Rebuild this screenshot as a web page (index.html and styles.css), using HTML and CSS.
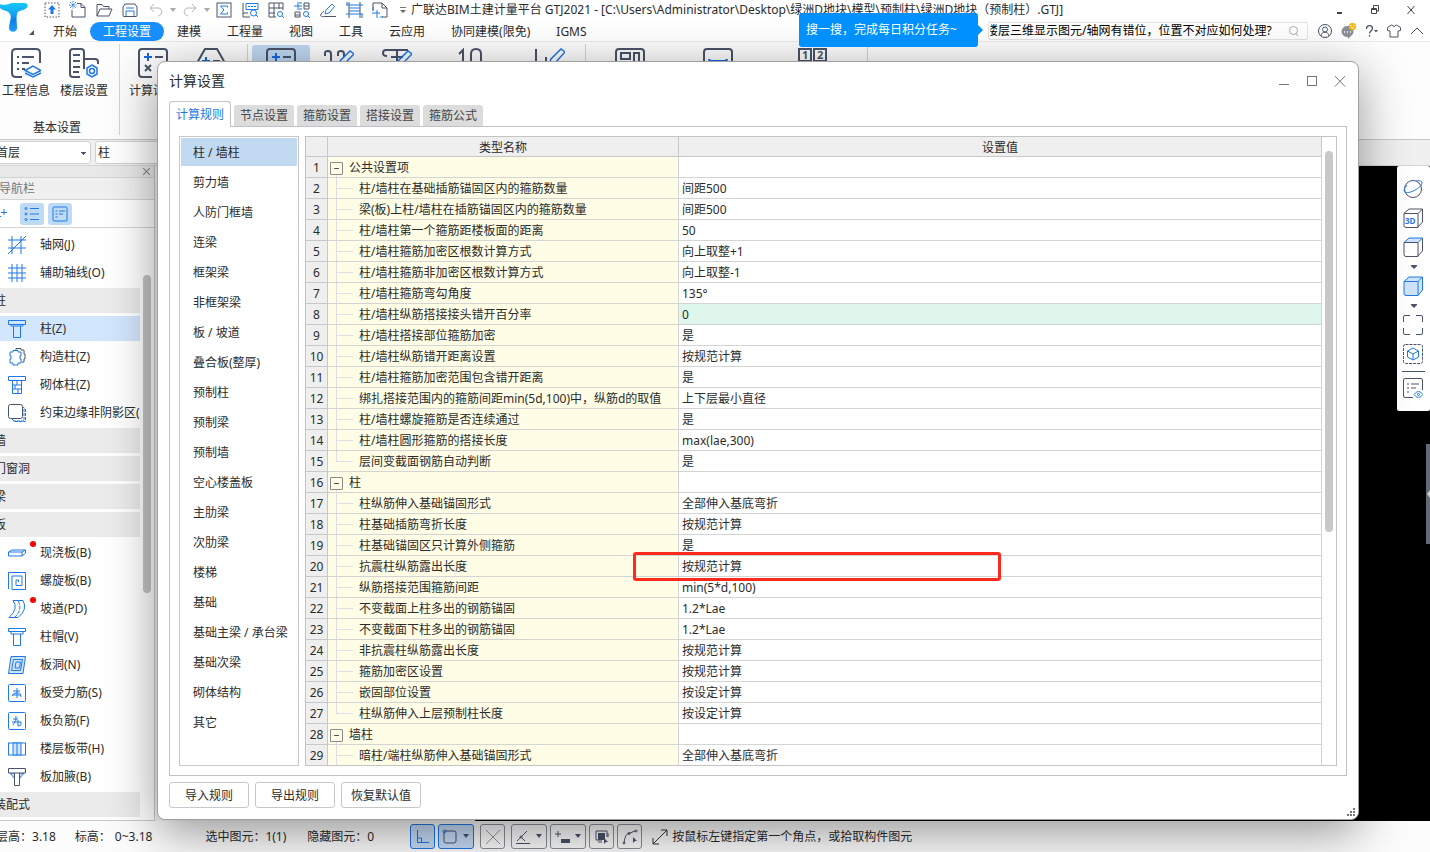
FILE: index.html
```html
<!DOCTYPE html>
<html lang="zh-CN">
<head>
<meta charset="utf-8">
<title>广联达BIM土建计量平台 GTJ2021</title>
<link rel="stylesheet" href="styles.css">
</head>
<body>
<div class="app">
  <header class="header">
    <div class="brand">
      <svg class="logo" viewBox="0 0 29 30" aria-hidden="true"><defs><linearGradient id="lg" x1="0" y1="0" x2="0" y2="1"><stop offset="0" stop-color="#16c8f6"/><stop offset=".35" stop-color="#16a6f4"/><stop offset=".6" stop-color="#0f7fe6"/><stop offset="1" stop-color="#1ba0ff"/></linearGradient></defs><path d="M0 1 C4 3 8 1 12 0 L25 0 C29 1 28 5 25 6 C22 8 18 7 17 11 C16 15 17 20 17 25 C17 30 9 30 9 25 C9 20 12 15 10 11 C8 7 3 8 0 5Z" fill="url(#lg)"/></svg>
      <svg class="brand-menu" viewBox="0 0 5 5" aria-hidden="true"><path d="M5 0V5H0Z" fill="#555"/></svg>
    </div>
    <div class="titlebar">
      <button class="qa" aria-label="上传"><svg viewBox="0 0 18 18"><rect x="2" y="2" width="14" height="14" stroke-dasharray="1.5 1.5"/><path class="bf" d="M9 4l4 4.5H10.500V13h-3V8.500H5Z"/></svg></button>
      <button class="qa" aria-label="新建"><svg viewBox="0 0 18 18"><path d="M8 2.500h4l4 4V16H3V9M12 2.500v4h4"/><path class="b" d="M1 1l6 6M7 1L1 7M4 0v8M0 4h8" stroke-dasharray="1.500 1"/></svg></button>
      <button class="qa" aria-label="打开"><svg viewBox="0 0 18 18"><path d="M2 15V3.500h5l1.500 2H14V8M2 15L5 8h12l-3 7Z"/></svg></button>
      <button class="qa" aria-label="保存"><svg viewBox="0 0 18 18"><path d="M4 3h10l2 3v8.500q0 1-1 1H3q-1 0-1-1V6Z"/><path class="b" d="M5 15v-5h8v5M5 7h8"/></svg></button>
      <button class="qa dim" aria-label="撤销"><svg viewBox="0 0 18 18"><path d="M7 3L3 7l4 4M3 7h8c5 0 5 7 0 8"/></svg></button>
      <svg class="mini" viewBox="0 0 8 5" aria-hidden="true"><path d="M1 0h6L4 4Z" fill="#aaa"/></svg>
      <button class="qa dim" aria-label="恢复"><svg viewBox="0 0 18 18"><path d="M11 3l4 4-4 4M15 7H7c-5 0-5 7 0 8"/></svg></button>
      <svg class="mini" viewBox="0 0 8 5" aria-hidden="true"><path d="M1 0h6L4 4Z" fill="#aaa"/></svg>
      <button class="qa" aria-label="汇总计算"><svg viewBox="0 0 18 18"><rect x="2" y="2" width="14" height="14"/><path class="b" d="M12.500 6.500V5h-7L9 9l-3.500 4h7v-1.500"/></svg></button>
      <button class="qa" aria-label="查看计算式"><svg viewBox="0 0 18 18"><path d="M2 2v14h7M2 12h5"/><path class="b" d="M5 2.500h12v6H5Z"/><path class="b" d="M7 5.500h9" stroke-dasharray="2 1"/><circle class="b" cx="12.500" cy="12" r="3"/><path class="b" d="M15 14l2 2"/></svg></button>
      <button class="qa" aria-label="查看工程量"><svg viewBox="0 0 18 18"><path d="M9 16H2V2h14v7M2 7h14M2 12h6M7 2v14M12 2v6"/><circle class="b" cx="13" cy="13" r="2.500"/><path class="b" d="M15 15l2 2"/></svg></button>
      <button class="qa" aria-label="查看钢筋量"><svg viewBox="0 0 18 18"><path d="M11 2h5v6h-5ZM2 11h5v5H2ZM2 14h5M11 5h5"/><path class="b" d="M1 5h8M5 1v8M6 2h3M6 8h3"/><circle class="b" cx="13" cy="13" r="2.500"/><path class="b" d="M15 15l2 2"/></svg></button>
      <button class="qa" aria-label="编辑"><svg viewBox="0 0 18 18"><path class="b" d="M7 9l6-6 2.500 2.500L10 12l-4 1Z"/><path d="M5 10c-6 5-3 6 1 5.500h11"/></svg></button>
      <button class="qa" aria-label="楼层"><svg viewBox="0 0 18 18"><path d="M4 1v16M15 1v16"/><path class="b" d="M1 4h17M1 13h17M4 7h11M4 10h11M2 1v3M17 13v4"/></svg></button>
      <button class="qa" aria-label="选择"><svg viewBox="0 0 18 18"><path d="M2 10V2h9l5 5v9h-5M11 2v5h5"/><path class="b" d="M1 12h8M6 9v8M2 6v3M9 16h3"/></svg></button>
      <svg class="more" viewBox="0 0 8 8" aria-hidden="true"><path d="M1 1.500h6" stroke="#777"/><path d="M1 4h6L4 7Z" fill="#666"/></svg>
      <h1 class="doc">广联达BIM土建计量平台 GTJ2021 - [C:\Users\Administrator\Desktop\绿洲D地块\模型\预制柱\绿洲D地块（预制柱）.GTJ]</h1>
      <div class="winctl">
        <button aria-label="最小化"><svg viewBox="0 0 12 12"><path d="M4 9h5" stroke-width="2"/></svg></button>
        <button aria-label="还原"><svg viewBox="0 0 12 12"><path d="M2.500 4.500h5v5h-5ZM4.500 4V1.500h5v5.500H8M3 5.500h4"/></svg></button>
        <button aria-label="关闭"><svg viewBox="0 0 12 12"><path d="M2.500 2l7 8M9.500 2l-7 8"/></svg></button>
      </div>
    </div>
    <nav class="menu">
      <a href="#">开始</a><a href="#" class="on">工程设置</a><a href="#">建模</a><a href="#">工程量</a><a href="#">视图</a><a href="#">工具</a><a href="#">云应用</a><a href="#">协同建模(限免)</a><a href="#">IGMS</a>
      <div class="tools">
        <div class="search">
          <input type="text" aria-label="搜索" value="楼层三维显示图元/轴网有错位，位置不对应如何处理?">
          <svg viewBox="0 0 12 12" aria-hidden="true"><circle cx="5.500" cy="5.500" r="4" fill="none" stroke="#aaa"/><path d="M8 8.500l2 2.500" stroke="#aaa"/></svg>
        </div>
        <button aria-label="用户"><svg viewBox="0 0 16 16"><circle cx="8" cy="8" r="6.500"/><circle cx="8" cy="6.500" r="2.500"/><path d="M4 13c0-5 8-5 8 0"/></svg></button>
        <button aria-label="消息"><svg viewBox="0 0 16 16"><path d="M7 3a6 5.500 0 1 0 1 11v2l3-3a5.500 5.500 0 0 0-4-10Z" fill="#8b8f96" stroke="none"/><path d="M4 9h1M7 9h1M10 9h1" stroke="#fff" stroke-width="1.500"/><rect x="9" y="0" width="7" height="7" rx="3" fill="#f9b514" stroke="none"/><path d="M11 2v1M14 2v1M11 4q1.500 2 3 0" stroke="#fff"/></svg></button>
        <button aria-label="帮助"><svg viewBox="0 0 16 16"><path d="M3.500 6c0-5 6-4 6-.5 0 2.500-3 2.500-3 5M6.500 12v1.500" stroke-width="1.300"/><path d="M11 7h4l-2 2.500Z" fill="#4a5368" stroke="none"/></svg></button>
        <button aria-label="皮肤"><svg viewBox="0 0 16 16"><path d="M5.500 2L1.500 4.500v3L4 8v6h8V8l2.500-.5v-3L10.500 2Q8 5 5.500 2Z"/></svg></button>
        <button aria-label="收起"><svg viewBox="0 0 16 16"><path d="M2 11l6-6 6 6"/></svg></button>
      </div>
    </nav>
    <div class="tip">搜一搜，完成每日积分任务~</div>
  </header>

  <section class="ribbon" aria-label="功能区">
    <div class="rgroup first">
      <div class="rbtns">
        <button class="rb"><svg viewBox="0 0 30 30"><path d="M29 15V5q0-4-4-4H5Q1 1 1 5v20q0 4 4 4h6M6 9h2M11 9h12M6 15h2M11 15h7M6 21h2M11 21h3"/><path class="b" d="M14 22.500l8-4.500 8 4.500-8 4Z M14 25l8 4 8-4"/></svg>工程信息</button>
        <button class="rb"><svg viewBox="0 0 30 30"><path d="M11 29H4q-3 0-3-3V4q0-3 3-3h8q3 0 3 3v17M4 7h7M4 13h7M4 19h7M4 24h6M15 11h11q3 0 3 3v2"/><path class="b" d="M23 17l5 3v6l-5 3-5-3v-6Z"/><circle class="b" cx="23" cy="23" r="2.500"/></svg>楼层设置</button>
      </div>
      <div class="rname">基本设置</div>
    </div>
    <div class="rgroup">
      <div class="rbtns">
        <button class="rb"><svg viewBox="0 0 30 30"><path d="M29 15V4q0-3-3-3H4Q1 1 1 4v22q0 3 3 3h10M17 9h8M7 17l6 6M13 17l-6 6"/><path class="b2" d="M6 9h8M10 5v8"/></svg>计算设置</button>
        <button class="rb" aria-label="比重设置"><svg viewBox="0 0 30 30"><path d="M1 15L9 1h12l8 14M17 13h7"/><path class="b2" d="M6 13h8M10 9v8"/></svg></button>
      </div>
    </div>
    <div class="rgroup">
      <div class="rbtns">
        <button class="rb sel" aria-label="计算规则"><svg viewBox="0 0 30 30"><path d="M29 18V4q0-3-3-3H4Q1 1 1 4v22M17 9h8"/><path class="b2" d="M6 9h8M10 5v8"/></svg></button>
        <button class="rb" aria-label="弯钩设置"><svg viewBox="0 0 30 30"><path d="M1 8V5q0-2 3-2t3 3v12M14 8V5q0-2 3-2t3 3v3"/><path class="b" d="M14 18l2-5L26 3l4 3-10 10-3 3"/></svg></button>
        <button class="rb" aria-label="弯曲调整"><svg viewBox="0 0 30 30"><path d="M5 8Q1 8 1 5q0-3 3-3h22M15 3v12M9 9h12"/><path class="b" d="M14 18l2-5L26 3l4 3-10 10-3 3"/></svg></button>
        <button class="rb wide" aria-label="损耗设置"><svg viewBox="0 0 30 30"><path d="M4 6l4-4v20M16 18V6q0-5 5-5t5 5v14"/></svg></button>
        <button class="rb mid" aria-label="报表设置"><svg viewBox="0 0 30 30"><path d="M1 1v20M6 13v8M11 9v8"/><path class="b" d="M14 16l2-5L26 1l4 3-10 11-3 3"/></svg></button>
      </div>
    </div>
    <div class="rgroup last">
      <div class="rbtns">
        <button class="rb wide" aria-label="布局"><svg viewBox="0 0 30 30"><rect x="1" y="1" width="28" height="28" rx="3"/><path d="M6 5h9v6H6ZM19 5h5v12h-5ZM6 15h9"/></svg></button>
        <button class="rb wide" aria-label="锁定"><svg viewBox="0 0 30 30"><rect x="1" y="1" width="28" height="28" rx="3"/><path class="b2" d="M6 11q0 2 3 2h12q3 0 3-2"/></svg></button>
        <button class="rb xwide" aria-label="编号"><svg viewBox="0 0 30 30"><rect x="1" y="1" width="12" height="12"/><rect x="16" y="1" width="12" height="12"/><text x="4" y="11">1</text><text x="19" y="11">2</text></svg></button>
      </div>
    </div>
  </section>

  <div class="picker">
    <select aria-label="楼层"><option>首层</option></select>
    <select class="kind" aria-label="构件"><option>柱</option></select>
  </div>

  <main class="work">
    <aside class="nav">
      <div class="nav-top"><button aria-label="关闭导航栏"><svg viewBox="0 0 10 10"><path d="M2 2l6 6M8 2L2 8"/></svg></button></div>
      <h2 class="nav-title">导航栏</h2>
      <div class="nav-tools">
        <button class="plus" aria-label="添加"><svg viewBox="0 0 20 20"><path d="M14 5v6M11 8.500h6M8.500 10v5M6 12.500h5"/></svg></button>
        <button class="act" aria-label="列表"><svg viewBox="0 0 20 20"><path d="M8 4.500h9M8 10h9M8 15.500h9"/><circle cx="4" cy="4.500" r="1"/><circle cx="4" cy="10" r="1"/><circle cx="4" cy="15.500" r="1"/></svg></button>
        <button class="act" aria-label="详情"><svg viewBox="0 0 20 20"><rect x="3" y="3" width="14" height="14" rx="1"/><path d="M5.500 7h2M9 7h6M5.500 10h2M9 10h4M5.500 13h2"/></svg></button>
      </div>
      <div class="nav-body">
        <ul class="tree">
          <li><svg viewBox="0 0 18 18"><path d="M0 4h18M0 12h18M4 0v18M13 0v18M0 18L18 0"/></svg>轴网(J)</li>
          <li><svg viewBox="0 0 18 18"><path d="M0 4h18M0 9h18M0 14h18M4 0v18M9 0v18M14 0v18"/></svg>辅助轴线(O)</li>
          <li class="cat">柱</li>
          <li class="cur"><svg viewBox="0 0 18 18"><path d="M.5 .5h17v4H.5ZM3 4.500V6h12V4.500M5.500 6v11.500h7V6"/></svg>柱(Z)</li>
          <li><svg viewBox="0 0 18 18"><path class="k" d="M8 2V.5h5V2h3v4h1v5h-1v3h-2"/><path d="M5 2.500h5V4h3v4h-1v3h1v4h-3v2H5v-2H2v-4h1V8H2V4h3Z"/></svg>构造柱(Z)</li>
          <li><svg viewBox="0 0 18 18"><path d="M.5 .5h17v4H.5ZM4.500 4.500v13h9v-13M4.500 9h9M4.500 13h9M9 5v4M7 9v4M10 13v4"/></svg>砌体柱(Z)</li>
          <li><svg viewBox="0 0 18 18"><path d="M4 15l3 2.500h10.500V5L15 3M16 5v12H5" stroke-dasharray="3 1"/><rect class="k" x=".5" y=".5" width="14" height="14" rx="2"/></svg>约束边缘非阴影区(Z)</li>
          <li class="cat">墙</li>
          <li class="cat">门窗洞</li>
          <li class="cat">梁</li>
          <li class="cat">板</li>
          <li class="new"><svg viewBox="0 0 18 18"><path d="M.5 8L4 6h13.500v3L14 12H.5ZM.5 8H14v4M14 8l3.500-2"/></svg>现浇板(B)</li>
          <li><svg viewBox="0 0 18 18"><path d="M.5 17V.5h17v17H4V4h10v9.500H8V8h2.500v2"/></svg>螺旋板(B)</li>
          <li class="new"><svg viewBox="0 0 18 18"><path d="M5 .5q6 8-4 17h9q10-8 5-17Z"/><path d="M10 1q5 8-3 16" stroke-dasharray="4 1"/></svg>坡道(PD)</li>
          <li><svg viewBox="0 0 18 18"><path d="M.5 .5h17v3H.5ZM3 3.500V6h12V3.500M5.500 6v11.500h7V6"/></svg>柱帽(V)</li>
          <li><svg viewBox="0 0 18 18"><path class="fill" d="M3 .5h14.500L15 17.500H.5Z"/><path d="M5.500 3.500h9L12.500 14.500h-9ZM8 6h4.500l-1 6H7Z"/></svg>板洞(N)</li>
          <li><svg viewBox="0 0 18 18"><rect x=".5" y=".5" width="17" height="17" rx="1"/><path d="M5 7h7M9 4v10M4 12q1-3 4-3 5-1 5 4M5 11h8"/></svg>板受力筋(S)</li>
          <li><svg viewBox="0 0 18 18"><rect x=".5" y=".5" width="17" height="17" rx="1"/><path d="M5 7h5M8 4q1 5-3 9M4 10h9v2q0 2-3 2M10 8v6"/></svg>板负筋(F)</li>
          <li><svg viewBox="0 0 18 18"><rect x=".5" y="3" width="17" height="12"/><path class="fill" d="M5 3h8v12H5ZM9 3v12"/></svg>楼层板带(H)</li>
          <li><svg viewBox="0 0 18 18"><path class="fill" d="M2 5l5 6V5ZM16 5l-5 6V5Z"/><path class="k" d="M.5 .5h17V5H.5ZM6.500 5v12.500h5V5"/></svg>板加腋(B)</li>
          <li class="cat">装配式</li>
        </ul>
        <div class="nav-thumb"></div>
      </div>
    </aside>
    <div class="props"></div>
    <div class="canvas">
      <div class="viewbar">
        <button aria-label="动态观察"><svg viewBox="0 0 20 20"><circle cx="10" cy="10" r="8.500"/><path class="b" d="M13 2q6-1 6 2c0 5-16 13-18 8q0-3 3-6"/></svg></button>
        <button aria-label="三维"><svg viewBox="0 0 20 20"><path d="M1 5.500h14v14H3q-2 0-2-2ZM1 5.500L6 1h13.500v13L15 19M15 5.500L19.500 1"/><text x="2" y="16">3D</text></svg></button>
        <button aria-label="俯视"><svg viewBox="0 0 20 20"><path class="fill" d="M1 5.500L6 1h13.500L15 5.500Z"/><path d="M1 5.500h14v14H3q-2 0-2-2ZM19.500 1v13L15 19"/></svg></button>
        <svg class="caret" viewBox="0 0 8 5" aria-hidden="true"><path d="M1 0h6v1L4 4 1 1Z"/></svg>
        <button aria-label="着色"><svg viewBox="0 0 20 20"><path class="fill" d="M1 5.500L6 1h13.500v13L15 19.500H3q-2 0-2-2ZM1 5.500h14v14M15 5.500L19.500 1"/></svg></button>
        <svg class="caret" viewBox="0 0 8 5" aria-hidden="true"><path d="M1 0h6v1L4 4 1 1Z"/></svg>
        <button aria-label="全屏"><svg viewBox="0 0 20 20"><path d="M.5 7V2Q.5 .5 2 .5h5M13 .5h5q1.500 0 1.500 1.500v5M19.500 13v5q0 1.500-1.500 1.500h-5M7 19.500H2Q.5 19.500 .5 18v-5"/></svg></button>
        <button aria-label="局部三维"><svg viewBox="0 0 20 20"><rect x=".5" y=".5" width="19" height="19" rx="2" stroke-dasharray="3 1"/><path class="b" d="M10 4l5.500 3v6L10 16l-5.500-3V7ZM4.500 7l5.500 3 5.500-3M10 10v6"/></svg></button>
        <hr>
        <button aria-label="显示设置"><svg viewBox="0 0 20 20"><path d="M10 19.500H2Q.5 19.500 .5 18V2Q.5 .5 2 .5h16q1.500 0 1.500 1.500v10M4 6h2M8 6h8M4 10h2M8 10h5M4 14h2"/><path class="b" d="M11 16.500q4.500-6 9 0-4.500 6-9 0Z"/><circle class="b" cx="15.500" cy="16.500" r="1"/></svg></button>
      </div>
      <button class="pull" aria-label="展开"><svg viewBox="0 0 4 8"><path d="M4 0v8L1 4Z" fill="#ccc"/></svg></button>
    </div>
  </main>

  <footer class="status">
    <span class="pair">层高：<b>3.18</b></span>
    <span class="pair elev">标高：<b>0~3.18</b></span>
    <span class="pair picked">选中图元：<b>1(1)</b></span>
    <span class="pair hiddenels">隐藏图元：<b>0</b></span>
    <div class="snaps">
      <button class="on" aria-label="正交"><svg viewBox="0 0 16 16"><path class="b" d="M2.500 1v12.500H14M2.500 9h4v4"/></svg></button>
      <button class="on dd" aria-label="捕捉"><svg viewBox="0 0 16 16"><rect x="2" y="2" width="12" height="12" rx="2"/><circle class="b" cx="2.500" cy="2.500" r="1.500"/></svg><svg class="arr" viewBox="0 0 8 5"><path d="M1 0h6L4 4Z"/></svg></button>
      <button class="off" aria-label="交点"><svg viewBox="0 0 16 16"><path d="M1 1l14 14M15 1L1 15"/></svg></button>
      <button class="dd" aria-label="角度"><svg viewBox="0 0 16 16"><path d="M12 2L2 12M1 14.500h14M7 9l3 3"/><circle cx="6" cy="8" r="1"/></svg><svg class="arr" viewBox="0 0 8 5"><path d="M1 0h6L4 4Z"/></svg></button>
      <button class="dd" aria-label="偏移"><svg viewBox="0 0 16 16"><path d="M1 5h6M4 2v6"/><path class="kf" d="M7 10h9v4H7Z"/></svg><svg class="arr" viewBox="0 0 8 5"><path d="M1 0h6L4 4Z"/></svg></button>
      <button aria-label="图元"><svg viewBox="0 0 16 16"><path class="kf" d="M4 4h7v7H4Z"/><path d="M2 2h11v6M2 2v9h6M4 13h4M14 4v4"/><path class="kf" d="M10 9l4 4h-2l-2 2Z"/></svg></button>
      <button aria-label="折线"><svg viewBox="0 0 16 16"><path d="M2 14Q3 4 8 4l5-2"/><circle cx="2" cy="14" r="1"/><circle cx="7" cy="4.500" r="1"/><circle cx="14" cy="2" r="1"/><path class="kf" d="M11 8l4 4h-2l-2 2Z"/></svg></button>
    </div>
    <svg class="expand" viewBox="0 0 16 16" aria-hidden="true"><path d="M1 15L15 1M9 1h6v6M1 9v6h6"/></svg>
    <span>按鼠标左键指定第一个角点，或拾取构件图元</span>
  </footer>

  <div class="dialog" role="dialog" aria-labelledby="dlg-title">
    <div class="dlg-head">
      <h2 id="dlg-title">计算设置</h2>
      <div class="dlg-ctl">
        <button aria-label="最小化"><svg viewBox="0 0 12 12"><path d="M1 9.500h10"/></svg></button>
        <button aria-label="最大化"><svg viewBox="0 0 12 12"><rect x="1.500" y="1.500" width="9" height="9"/></svg></button>
        <button aria-label="关闭"><svg viewBox="0 0 12 12"><path d="M1 1l10 10.500M11 1L1 11.500"/></svg></button>
      </div>
    </div>
    <div class="tabs" role="tablist">
      <button class="tab on" role="tab" aria-selected="true">计算规则</button>
      <button class="tab" role="tab">节点设置</button>
      <button class="tab" role="tab">箍筋设置</button>
      <button class="tab" role="tab">搭接设置</button>
      <button class="tab" role="tab">箍筋公式</button>
    </div>
    <div class="pane">
      <ul class="kinds">
        <li class="on">柱 / 墙柱</li><li>剪力墙</li><li>人防门框墙</li><li>连梁</li><li>框架梁</li><li>非框架梁</li><li>板 / 坡道</li><li>叠合板(整厚)</li><li>预制柱</li><li>预制梁</li><li>预制墙</li><li>空心楼盖板</li><li>主肋梁</li><li>次肋梁</li><li>楼梯</li><li>基础</li><li>基础主梁 / 承台梁</li><li>基础次梁</li><li>砌体结构</li><li>其它</li>
      </ul>
      <div class="grid">
        <table>
          <colgroup><col class="c-no"><col class="c-name"><col></colgroup>
          <thead><tr><th></th><th>类型名称</th><th>设置值</th></tr></thead>
          <tbody>
            <tr class="root"><th>1</th><td><button aria-label="折叠"></button>公共设置项</td><td></td></tr>
            <tr><th>2</th><td>柱/墙柱在基础插筋锚固区内的箍筋数量</td><td>间距500</td></tr>
            <tr><th>3</th><td>梁(板)上柱/墙柱在插筋锚固区内的箍筋数量</td><td>间距500</td></tr>
            <tr><th>4</th><td>柱/墙柱第一个箍筋距楼板面的距离</td><td>50</td></tr>
            <tr><th>5</th><td>柱/墙柱箍筋加密区根数计算方式</td><td>向上取整+1</td></tr>
            <tr><th>6</th><td>柱/墙柱箍筋非加密区根数计算方式</td><td>向上取整-1</td></tr>
            <tr><th>7</th><td>柱/墙柱箍筋弯勾角度</td><td>135°</td></tr>
            <tr class="hot"><th>8</th><td>柱/墙柱纵筋搭接接头错开百分率</td><td>0</td></tr>
            <tr><th>9</th><td>柱/墙柱搭接部位箍筋加密</td><td>是</td></tr>
            <tr><th>10</th><td>柱/墙柱纵筋错开距离设置</td><td>按规范计算</td></tr>
            <tr><th>11</th><td>柱/墙柱箍筋加密范围包含错开距离</td><td>是</td></tr>
            <tr><th>12</th><td>绑扎搭接范围内的箍筋间距min(5d,100)中，纵筋d的取值</td><td>上下层最小直径</td></tr>
            <tr><th>13</th><td>柱/墙柱螺旋箍筋是否连续通过</td><td>是</td></tr>
            <tr><th>14</th><td>柱/墙柱圆形箍筋的搭接长度</td><td>max(lae,300)</td></tr>
            <tr class="end"><th>15</th><td>层间变截面钢筋自动判断</td><td>是</td></tr>
            <tr class="root"><th>16</th><td><button aria-label="折叠"></button>柱</td><td></td></tr>
            <tr><th>17</th><td>柱纵筋伸入基础锚固形式</td><td>全部伸入基底弯折</td></tr>
            <tr><th>18</th><td>柱基础插筋弯折长度</td><td>按规范计算</td></tr>
            <tr><th>19</th><td>柱基础锚固区只计算外侧箍筋</td><td>是</td></tr>
            <tr><th>20</th><td>抗震柱纵筋露出长度</td><td>按规范计算</td></tr>
            <tr><th>21</th><td>纵筋搭接范围箍筋间距</td><td>min(5*d,100)</td></tr>
            <tr><th>22</th><td>不变截面上柱多出的钢筋锚固</td><td>1.2*Lae</td></tr>
            <tr><th>23</th><td>不变截面下柱多出的钢筋锚固</td><td>1.2*Lae</td></tr>
            <tr><th>24</th><td>非抗震柱纵筋露出长度</td><td>按规范计算</td></tr>
            <tr><th>25</th><td>箍筋加密区设置</td><td>按规范计算</td></tr>
            <tr><th>26</th><td>嵌固部位设置</td><td>按设定计算</td></tr>
            <tr class="end"><th>27</th><td>柱纵筋伸入上层预制柱长度</td><td>按设定计算</td></tr>
            <tr class="root"><th>28</th><td><button aria-label="折叠"></button>墙柱</td><td></td></tr>
            <tr><th>29</th><td>暗柱/端柱纵筋伸入基础锚固形式</td><td>全部伸入基底弯折</td></tr>
          </tbody>
        </table>
        <div class="gutter"><div class="thumb"></div></div>
        <div class="mark"></div>
      </div>
    </div>
    <div class="dlg-foot">
      <button>导入规则</button><button>导出规则</button><button>恢复默认值</button>
    </div>
    <svg class="grip" viewBox="0 0 8 8" aria-hidden="true"><path d="M6 0h2v2H6ZM3 3h2v2H3ZM6 3h2v2H6ZM0 6h2v2H0ZM3 6h2v2H3ZM6 6h2v2H6Z" fill="#777"/></svg>
  </div>
</div>
</body>
</html>
```
FILE: styles.css
```css
* { box-sizing: border-box; }
body, h1, h2, ul, hr { margin: 0; padding: 0; }
ul { list-style: none; }
body {
  font: 12px/20px "Noto Sans", "Noto Sans CJK SC", sans-serif;
  color: #2b2b2b;
  background: #fff;
}
button, input, select { font: inherit; color: inherit; margin: 0; }
button { border: 0; padding: 0; background: none; }
svg { display: block; fill: none; stroke: none; }
h1, h2, b, th { font-size: 12px; font-weight: 400; }

.app {
  position: relative;
  height: 100vh;
  display: flex;
  flex-direction: column;
  overflow: hidden;
}

/* title bar and menu */
.header {
  position: relative;
  display: grid;
  grid-template: 20px 21px / 39px minmax(0, 1fr);
  border-bottom: 1px solid #ececec;
  height: 42px;
  flex: none;
}
.brand { grid-row: 1 / 3; display: flex; align-items: flex-end; padding-bottom: 6px; }
.logo { width: 29px; height: 30px; flex: none; margin-bottom: 2px; }
.brand-menu { width: 5px; height: 5px; }
.titlebar { display: flex; align-items: center; min-width: 0; }
.qa { width: 26px; height: 20px; display: grid; place-items: center; flex: none; }
.qa svg { width: 18px; height: 18px; stroke: #4a5368; }
.qa svg .b { stroke: #1e78e6; }
.qa svg .bf { fill: #1e78e6; stroke: none; }
.qa.dim svg { stroke: #b4b4b4; }
.mini { width: 8px; height: 5px; flex: none; }
.more { width: 8px; height: 8px; margin: 0 4px 0 6px; flex: none; }
.doc { white-space: nowrap; line-height: 22px; }
.winctl { margin-left: auto; display: flex; gap: 24px; padding-right: 13px; }
.winctl svg { width: 12px; height: 12px; stroke: #444; }
.menu { display: flex; align-items: flex-end; min-width: 0; padding-left: 1px; }
.menu a {
  padding: 0 13px;
  line-height: 19px;
  color: inherit;
  text-decoration: none;
  white-space: nowrap;
}
.menu a.on { background: #1890ff; color: #fff; border-radius: 10px; }
.tools { margin-left: auto; display: flex; align-items: center; gap: 7px; padding: 0 5px 1px 0; }
.search {
  width: 320px;
  height: 18px;
  display: flex;
  align-items: center;
  border: 1px solid #e2e2e2;
  border-radius: 2px;
  padding-right: 7px;
  margin-right: 2px;
}
.search input { flex: 1; min-width: 0; border: 0; padding: 0 1px; height: 16px; text-indent: -4px; color: #000; background: none; outline: 0; }
.search svg { width: 12px; height: 12px; }
.tools button svg { width: 16px; height: 16px; stroke: #4a5368; }
.tip {
  position: absolute;
  left: 799px;
  top: 13px;
  width: 179px;
  line-height: 34px;
  padding-left: 7px;
  color: #fff;
  background: #0090ff;
  border-radius: 3px;
  z-index: 2;
}
.tip::after {
  content: "";
  position: absolute;
  right: -5px;
  top: 12px;
  border: 5px solid transparent;
  border-left-color: #0090ff;
  border-right: 0;
}

/* ribbon */
.ribbon { display: flex; height: 98px; background: #fdfdfd; border-bottom: 1px solid #c8c8c8; padding-top: 2px; flex: none; }
.rgroup { position: relative; display: flex; flex-direction: column; padding: 0 0 0 4px; }
.rgroup::after { content: ""; position: absolute; right: 0; top: 0; height: 91px; border-right: 1px solid #d4d4d4; }
.rgroup:nth-child(2) { padding-right: 8px; }
.rgroup.first { padding: 0 7px 0 0; margin-left: -3px; }
.rgroup.last { padding: 0 4px 0 0; }
.rbtns { display: flex; }
.rb { width: 58px; height: 65px; display: flex; flex-direction: column; align-items: center; padding-top: 3px; line-height: 20px; white-space: nowrap; margin-top: 1px; }
.rb svg { width: 30px; height: 30px; stroke: #4a5368; stroke-width: 2; margin-bottom: 3px; flex: none; }
.rb svg .b { stroke: #1e78e6; stroke-width: 1.500; }
.rb svg .b2 { stroke: #1468e0; stroke-width: 2; }
.rb text { font: 700 11px "Open Sans", sans-serif; fill: #4a5368; stroke: none; }
.rb.sel { background: #bfd8f2; border-radius: 3px; }
.rb.wide { width: 88px; }
.rb.mid { width: 72px; }
.rb.xwide { width: 102px; }
.rname { text-align: center; margin-top: 8px; padding-left: 4px; }

/* floor and member pickers */
.picker { display: flex; gap: 4px; height: 26px; background: #f0f0f0; padding: 1px 0 2px; border-bottom: 1px solid #d4d4d4; flex: none; }
.picker select {
  appearance: none;
  width: 97px;
  height: 23px;
  margin-left: -6px;
  padding: 1px 1px 0;
  border: 1px solid #d0d0d0;
  border-radius: 3px;
  background: linear-gradient(#4a5368, #4a5368) 86px 10px / 5px 1px no-repeat, linear-gradient(#4a5368, #4a5368) 87px 11px / 3px 1px no-repeat, linear-gradient(#4a5368, #4a5368) 88px 12px / 1px 1px no-repeat, #fff;
}
.picker .kind { width: 120px; margin-left: 0; padding-left: 2px; }

/* work area */
.work { flex: 1; display: flex; min-height: 0; }
.nav { width: 155px; display: flex; flex-direction: column; border-right: 1px solid #c8c8c8; border-bottom: 1px solid #c8c8c8; overflow: hidden; flex: none; }
.nav-top { height: 12px; background: #e8e8e8; border-bottom: 1px solid #d4d4d4; display: flex; justify-content: flex-end; padding-right: 2px; flex: none; }
.nav-top svg { width: 11px; height: 11px; stroke: #888; }
.nav-title { height: 21px; line-height: 22px; background: #f0f0f0; color: #777; text-indent: -1px; flex: none; }
.nav-tools { height: 29px; display: flex; align-items: center; gap: 4px; border: solid #d4d4d4; border-width: 1px 0; flex: none; }
.nav-tools button { width: 24px; height: 22px; display: grid; place-items: center; border-radius: 3px; }
.nav-tools .plus { width: 16px; justify-content: end; padding-right: 6px; }
.nav-tools .act { background: #bfdaf5; }
.nav-tools svg { width: 20px; height: 20px; stroke: #1e78e6; }
.nav-body { flex: 1; display: flex; gap: 3px; min-height: 0; padding-top: 4px; }
.tree { width: 140px; overflow: hidden; }
.tree li { position: relative; height: 25px; margin: 2px 0 3px; padding-left: 8px; display: flex; align-items: center; gap: 14px; white-space: nowrap; }
.tree li:first-child { margin-top: 0; }
.tree svg { width: 18px; height: 18px; stroke: #1e78e6; flex: none; }
.tree svg .k { stroke: #4a5368; fill: #fff; }
.tree svg .fill { fill: #cfe3fa; }
.tree .cat { background: #ebebeb; padding-left: 0; text-indent: -6px; }
.tree .cur { background: #d2e6fd; }
.tree .new::after { content: ""; position: absolute; left: 30px; top: 1px; width: 6px; height: 6px; border-radius: 3px; background: #f00; }
.nav-thumb { width: 8px; height: 318px; margin-top: 43px; border-radius: 4px; background: #c4c4c4; }
.props { width: 320px; background: #f4f4f4; flex: none; }
.canvas { flex: 1; background: #000; display: flex; justify-content: flex-end; position: relative; }
.viewbar { width: 33px; align-self: flex-start; background: #fff; border-radius: 2px; padding: 13px 0; display: flex; flex-direction: column; align-items: center; gap: 9px; }
.viewbar svg { width: 20px; height: 20px; stroke: #4a5368; }
.viewbar button { margin-left: -2px; }
.viewbar svg .b { stroke: #1e78e6; }
.viewbar svg .fill { stroke: #1e78e6; fill: #cfe3fa; }
.viewbar text { font: 700 8px "Open Sans", sans-serif; fill: #1e78e6; stroke: none; }
.viewbar .caret { width: 8px; height: 5px; fill: #4a5368; stroke: none; margin: -1px 0 -3px; }
.viewbar hr { width: 23px; border: 0; border-top: 1px solid #4a5368; margin: -2px 0 -3px; }
.pull { position: absolute; right: 0; top: 278px; width: 4px; height: 100px; background: #616a75; }
.pull svg { width: 4px; height: 8px; }

/* status bar */
.status { height: 31px; background: #fcfcfc; display: flex; align-items: center; flex: none; white-space: nowrap; margin-left: -4px; }
.elev { margin-left: 19px; }
.elev b { margin-left: 4px; }
.picked { margin-left: 53px; }
.hiddenels { margin-left: 21px; }
.snaps { display: flex; gap: 3px; margin: 0 10px 0 36px; }
.snaps button { width: 25px; height: 25px; display: flex; align-items: center; justify-content: center; gap: 4px; border: 1px solid #8a8f98; border-radius: 3px; }
.snaps button.dd { width: 36px; }
.snaps button.on { border-color: #1e78e6; background: #c6dcf8; }
.snaps button.off { margin: 0 3px; }
.snaps svg { width: 16px; height: 16px; stroke: #4a5368; }
.snaps svg .b { stroke: #1e78e6; }
.snaps svg .kf { fill: #4a5368; stroke: none; }
.snaps .off svg { stroke: #999; }
.snaps .arr { width: 8px; height: 5px; fill: #4a5368; stroke: none; }
.expand { width: 16px; height: 16px; stroke: #333; margin-right: 4px; }

/* settings window, floating over the workspace */
.dialog {
  position: absolute;
  inset: 61px 71px 32px 157px;
  display: flex;
  flex-direction: column;
  background: #fff;
  border: 1px solid #a0a0a0;
  border-radius: 8px;
  box-shadow: 0 12px 50px rgba(0, 0, 0, .42);
  padding: 0 11px 11px;
}
.dlg-head { height: 39px; display: flex; align-items: center; justify-content: space-between; padding-bottom: 2px; flex: none; }
.dlg-head h2 { font-size: 14px; }
.dlg-ctl { display: flex; gap: 16px; padding-right: 1px; }
.dlg-ctl svg { width: 12px; height: 12px; stroke: #777; }
.tabs { display: flex; align-items: flex-end; gap: 3px; margin-bottom: -1px; flex: none; z-index: 1; }
.tab { width: 60px; height: 21px; margin-bottom: 1px; background: #dcdcdc; border-radius: 3px 3px 0 0; color: #444; line-height: 21px; }
.tab.on { width: 62px; height: 26px; margin: 0; border: 1px solid #c0c2c8; border-bottom: 0; background: #fff; color: #1e78e6; }
.pane { flex: 1; min-height: 0; display: flex; gap: 6px; border: 1px solid #c0c2c8; padding: 9px; }
.kinds { width: 120px; border: 1px solid #c8c8c8; padding: 1px; flex: none; overflow: hidden; }
.kinds li { height: 28px; line-height: 30px; margin-bottom: 2px; padding-left: 12px; white-space: nowrap; }
.kinds .on { background: #c1d9f1; }
.grid { position: relative; flex: 1; min-width: 0; display: flex; align-items: flex-start; border: 1px solid #c4c4c4; overflow: hidden; }
table { flex: 1; min-width: 0; table-layout: fixed; border-collapse: separate; border-spacing: 0; }
.c-no { width: 22px; }
.c-name { width: 351px; }
th, td { height: 21px; padding: 2px 3px 0; line-height: 18px; border: solid #d4d4d4; border-width: 0 1px 1px 0; text-align: left; white-space: nowrap; overflow: hidden; }
th { background: #efefef; border-color: #c8c8c8; padding: 2px 0 0; text-align: center; }
thead th { height: 20px; line-height: 17px; }
td:nth-child(2) {
  padding-left: 31px;
  background: linear-gradient(#dedee6, #dedee6) 8px 0 / 1px 100% no-repeat, linear-gradient(#dedee6, #dedee6) 9px 10px / 16px 1px no-repeat, #fffde5;
}
.end td:nth-child(2) { background-size: 1px 11px, 16px 1px, auto; }
.root td:nth-child(2) { padding: 1px 0 0 2px; background: linear-gradient(#dedee6, #dedee6) 8px 15px / 1px 6px no-repeat, #fffde5; }
td button { width: 13px; height: 13px; margin-right: 6px; vertical-align: -2px; border: 1px solid #8a8a8a; border-radius: 1px; background: linear-gradient(#555, #555) center / 5px 1px no-repeat, #fffde5; }
.hot td:last-child { background: #def6ec; }
.gutter { width: 14px; padding: 14px 3px 0 2px; flex: none; }
.thumb { height: 381px; width: 8px; margin-left: 1px; border-radius: 4px; background: #c8c8c8; }
.mark { position: absolute; left: 327px; top: 415px; width: 368px; height: 29px; border: 3px solid #fb2a1d; border-radius: 3px; }
.dlg-foot { display: flex; gap: 6px; margin-top: 6px; flex: none; }
.dlg-foot button { height: 26px; width: 80px; padding-top: 2px; border: 1px solid #c8c8c8; border-radius: 3px; background: #fff; }
.grip { position: absolute; right: 3px; bottom: 3px; width: 8px; height: 8px; }
```
